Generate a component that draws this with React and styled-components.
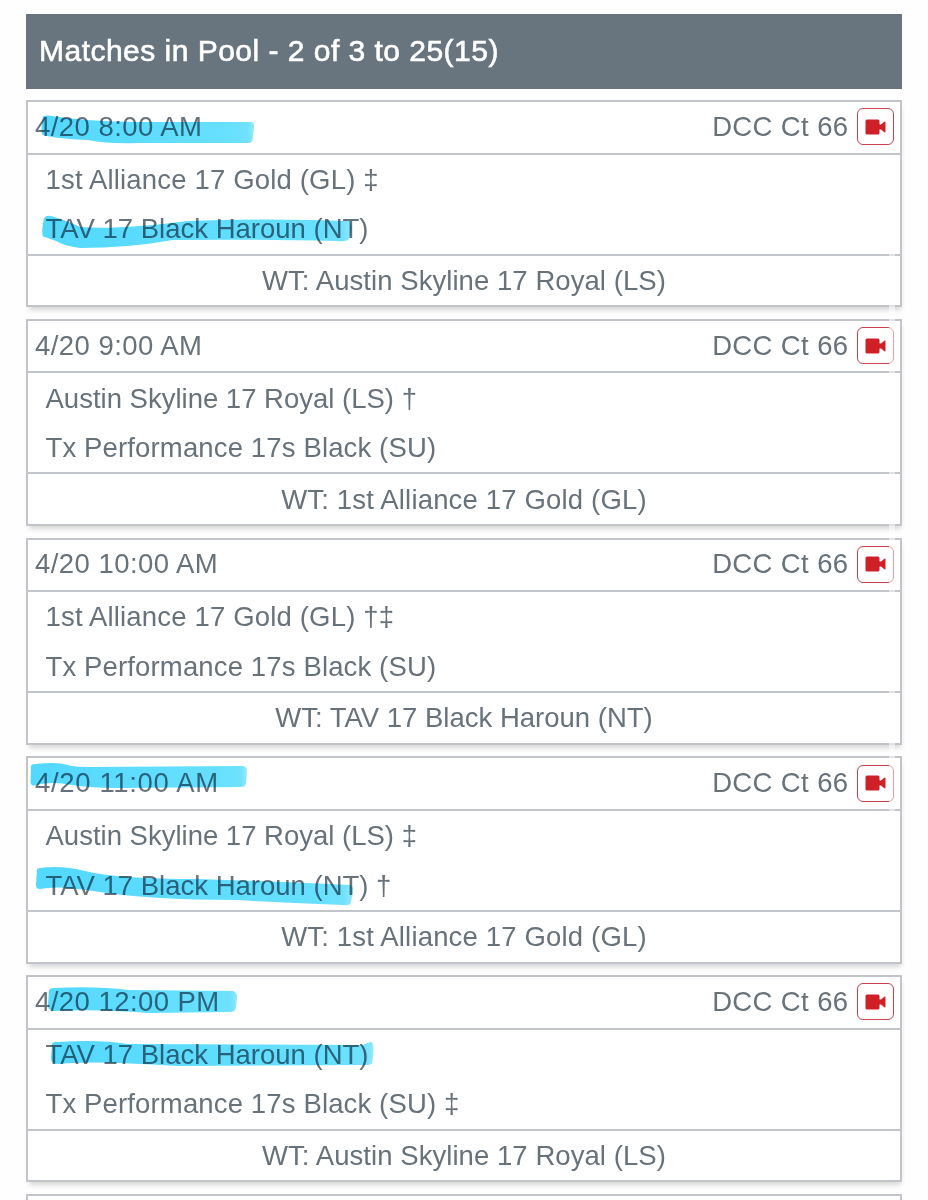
import React from 'react';
import styled, { createGlobalStyle } from 'styled-components';

const GlobalStyle = createGlobalStyle`
  *, *::before, *::after { box-sizing: border-box; }
  html { overflow: hidden; }
  body {
    margin: 0;
    background: #fefefe;
    color: #68727b;
    font-family: "Liberation Sans", Arial, sans-serif;
    font-size: 27.5px;
  }
`;

const Page = styled.main`
  position: relative;
  height: 1200px;
  overflow: hidden;
  padding: 13.5px 26px 0;
`;

const PoolHeader = styled.h1`
  display: flex;
  align-items: center;
  height: 75.5px;
  margin: 0 0 11px;
  padding: 0 13px 1px;
  background: #68747e;
  color: #fff;
  font-size: 30px;
  font-weight: 400;
  letter-spacing: 0.48px;
  white-space: nowrap;
  -webkit-text-stroke: 0.6px #fff;
`;

const MatchList = styled.div`
  display: flex;
  flex-direction: column;
  gap: 11.5px;
`;

const Card = styled.article`
  flex: none;
  height: 207.25px;
  border: 2px solid #c1c5ca;
  background: #fff;
  box-shadow: 1px 5px 5px -2px rgba(0, 0, 0, 0.16);
`;

const CardTop = styled.header`
  position: relative;
  display: flex;
  align-items: center;
  justify-content: space-between;
  height: 52.5px;
  padding: 0 6.5px 1px 7px;
  border-bottom: 2px solid #c1c5ca;
`;

const Teams = styled.div`
  height: 101px;
  border-bottom: 2px solid #c1c5ca;
`;

const Team = styled.div`
  position: relative;
  display: flex;
  align-items: center;
  height: 49.5px;
  padding: 1.2px 0 0 17.5px;
`;

const WorkTeam = styled.footer`
  display: flex;
  align-items: center;
  justify-content: center;
  height: 50.5px;
`;

const Label = styled.span`
  white-space: pre;
  line-height: 32px;
  letter-spacing: ${(p) => p.$track ?? 0}px;
`;

const Court = styled.div`
  display: flex;
  align-items: center;
  gap: 8px;
`;

const VideoButton = styled.button`
  display: grid;
  place-items: center;
  width: 37px;
  height: 37px;
  padding: 0 0 0 1px;
  border: 1.5px solid #c8414c;
  border-radius: 6px;
  background: #fff;
`;

const Marker = styled.svg`
  position: absolute;
  left: 0;
  top: ${(p) => p.$top}px;
  width: 400px;
  height: 52px;
  overflow: visible;
  pointer-events: none;
  mix-blend-mode: multiply;
`;

const ScrollThumb = styled.div`
  position: absolute;
  top: 248px;
  right: 33px;
  width: 6px;
  height: 564px;
  border-radius: 3px;
  background: rgba(255, 255, 255, 0.5);
`;

const Highlight = ({ id, d, end, top = 0 }) => (
  <Marker viewBox="0 0 400 52" $top={top}>
    <defs>
      <linearGradient id={id} gradientUnits="userSpaceOnUse" x1="0" y1="0" x2={end} y2="0">
        <stop offset="0" stopColor="#52d8fe" />
        <stop offset="0.9" stopColor="#68e0ff" />
        <stop offset="0.97" stopColor="#70e1fd" />
        <stop offset="1" stopColor="#92e8fd" />
      </linearGradient>
    </defs>
    <path d={d} fill={`url(#${id})`} />
  </Marker>
);

const VideoIcon = () => (
  <svg width="21" height="16" viewBox="0 0 21 16" fill="#cf2028">
    <rect x="0.5" y="0.5" width="14" height="15" rx="1.5" />
    <path d="M14 5.500 16 5.500 19.300 2.700Q20.500 2 20.500 3.500V12.500Q20.500 14 19.300 13.200L16 10.500 14 10.500Z" />
  </svg>
);

const matches = [
  {
    time: '4/20 8:00 AM',
    mark: { end: 226, d: 'M15 14.5 Q16 13 20 13.5 Q60 20 110 20 L223 20 Q226.500 20 226 25 L224.500 38 Q224 41 220 41 L110 41 Q80 42 60 38 Q30 37 15 33 Q12 31 15 14.500Z' },
    teams: [
      { name: '1st Alliance 17 Gold (GL) ‡', track: 0.17 },
      { name: 'TAV 17 Black Haroun (NT)', mark: { end: 324, d: 'M16 13 Q19 10 23 11 Q40 16 52 22 Q90 25 160 16 Q240 13 322 16 Q326 24 321 34 Q318 37 310 36 Q210 34 145 35 Q100 43 52 43 Q36 41 28 36 L17 32 Q12 33 16 13Z' } },
    ],
    work: 'WT: Austin Skyline 17 Royal (LS)',
    workTrack: 0.06,
  },
  {
    time: '4/20 9:00 AM',
    teams: [
      { name: 'Austin Skyline 17 Royal (LS) †', track: 0 },
      { name: 'Tx Performance 17s Black (SU)', track: 0.14 },
    ],
    work: 'WT: 1st Alliance 17 Gold (GL)',
    workTrack: 0.17,
  },
  {
    time: '4/20 10:00 AM',
    teams: [
      { name: '1st Alliance 17 Gold (GL) †‡', track: 0.17 },
      { name: 'Tx Performance 17s Black (SU)', track: 0.14 },
    ],
    work: 'WT: TAV 17 Black Haroun (NT)',
  },
  {
    time: '4/20 11:00 AM',
    timeTrack: 0.65,
    mark: { end: 219, d: 'M3 8 Q3 6 8 6 Q30 3 43 8 Q50 9 60 9 L214 8 Q219 8 219 13 L218 25 Q218 29 213 29 L90 30 Q62 30 44 27 Q24 23 8 27 Q3 29 2.500 24Z' },
    teams: [
      { name: 'Austin Skyline 17 Royal (LS) ‡', track: 0 },
      { name: 'TAV 17 Black Haroun (NT) †', mark: { end: 325, d: 'M9 9 Q9 7 12 7 Q34 4 57 10 Q90 18 170 18 Q240 20 322 24 Q326 25 325 31 L323 41 Q322 45 316 44 Q250 42 210 39 Q120 39 65 30 Q30 24 12 28 Q8 28 8 24Z' } },
    ],
    work: 'WT: 1st Alliance 17 Gold (GL)',
    workTrack: 0.17,
  },
  {
    time: '4/20 12:00 PM',
    mark: { end: 209, d: 'M21 14 Q21 11 26 11 Q70 9 100 13 L205 14 Q209 15 209 20 L208 31 Q207 35 202 35 L120 36 Q70 32 27 34 Q20 34 20 28Z' },
    teams: [
      { name: 'TAV 17 Black Haroun (NT)', mark: { end: 346, d: 'M24 14 Q25 11 30 12 Q70 9 100 14 L335 15 Q341 12 344 12 Q347 18 344 33 Q343 35 338 35 L150 36 Q60 30 30 34 Q23 34 23 28Z' } },
      { name: 'Tx Performance 17s Black (SU) ‡', track: 0.14 },
    ],
    work: 'WT: Austin Skyline 17 Royal (LS)',
    workTrack: 0.06,
  },
];

const Match = ({ match, index }) => (
  <Card>
    <CardTop>
      <Label $track={match.timeTrack ?? 0.45}>{match.time}</Label>
      <Court>
        <Label $track={0.38}>DCC Ct 66</Label>
        <VideoButton aria-label="Watch video">
          <VideoIcon />
        </VideoButton>
      </Court>
      {match.mark && <Highlight id={`time-${index}`} {...match.mark} />}
    </CardTop>
    <Teams>
      {match.teams.map((team) => (
        <Team key={team.name}>
          <Label $track={team.track}>{team.name}</Label>
          {team.mark && <Highlight id={`team-${index}`} top={0.8} {...team.mark} />}
        </Team>
      ))}
    </Teams>
    <WorkTeam>
      <Label $track={match.workTrack}>{match.work}</Label>
    </WorkTeam>
  </Card>
);

export default function App() {
  return (
    <>
      <GlobalStyle />
      <Page>
        <PoolHeader>Matches in Pool - 2 of 3 to 25(15)</PoolHeader>
        <MatchList>
          {matches.map((match, index) => (
            <Match key={match.time} match={match} index={index} />
          ))}
          <Card />
        </MatchList>
        <ScrollThumb />
      </Page>
    </>
  );
}
